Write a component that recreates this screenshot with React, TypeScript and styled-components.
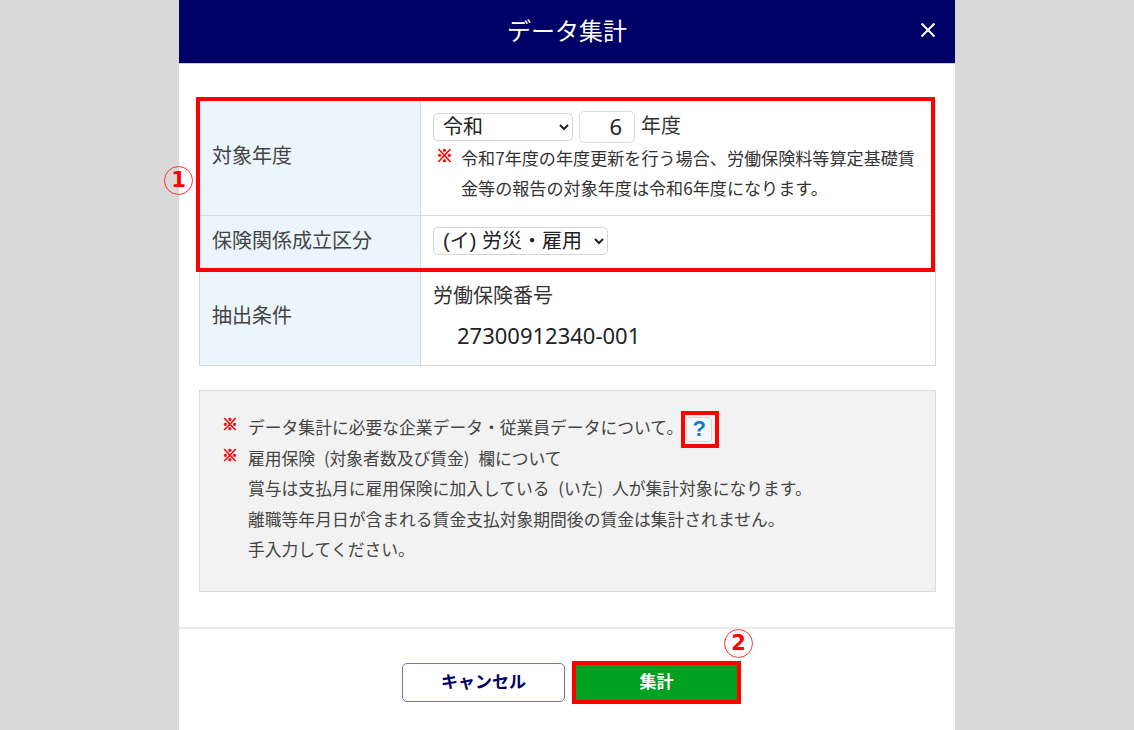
import React from "react";
import styled, { createGlobalStyle } from "styled-components";

const Global = createGlobalStyle`
  html, body { margin: 0; padding: 0; height: 100%; background: #d9d9d9; }
  body { font-family: "Noto Sans CJK JP", "Noto Sans", sans-serif; color: #333; }
  * { box-sizing: border-box; }
`;

const Page = styled.div`
  width: 1134px;
  height: 730px;
  overflow: hidden;
  display: flex;
  justify-content: center;
`;

const Modal = styled.div`
  position: relative;
  width: 776px;
  height: 730px;
  background: #fff;
  display: flex;
  flex-direction: column;
`;

const Header = styled.header`
  position: relative;
  height: 64px;
  background: #000066;
  border-bottom: 1px solid #c8c8e0;
  display: flex;
  align-items: center;
  justify-content: center;
  color: #fff;
  font-size: 24px;
  line-height: 60px;
  padding-bottom: 3px;
`;

const CloseButton = styled.button`
  position: absolute;
  right: 18px;
  top: 21px;
  width: 18px;
  height: 18px;
  padding: 0;
  border: 0;
  background: none;
  display: flex;
`;

const Body = styled.div`
  padding: 36px 19px 0 20px;
  flex: 1;
`;

const Table = styled.table`
  width: 737px;
  border-collapse: collapse;
  table-layout: fixed;
`;

const Label = styled.th`
  width: 221px;
  background: #edf5fc;
  border: 1px solid #d8d8d8;
  padding: 0 0 7px 12px;
  text-align: left;
  font-weight: 400;
  font-size: 20px;
  color: #444;
`;

const Cell = styled.td<{ $h: number }>`
  height: ${(p) => p.$h}px;
  border: 1px solid #d8d8d8;
  padding: 0 12px;
  vertical-align: top;
`;

const Line = styled.div<{ $top: number }>`
  display: flex;
  align-items: center;
  gap: 6px;
  height: ${(p) => p.$top + 32}px;
  padding-top: ${(p) => p.$top}px;
  font-size: 20px;
  line-height: 32px;
`;

const Select = styled.select<{ $w: number }>`
  width: ${(p) => p.$w}px;
  height: 28px;
  font-family: "Liberation Sans", "Noto Sans CJK JP", sans-serif;
  font-size: 20px;
  color: #222;
  background: #fff;
  border: 1px solid #d6d6d6;
  border-radius: 5px;
  padding: 0 0 1px 5px;
  outline: none;
`;

const YearInput = styled.input`
  width: 56px;
  height: 32px;
  font-family: "Noto Sans", sans-serif;
  font-size: 22px;
  color: #222;
  text-align: right;
  padding: 0 12px 3px 0;
  border: 1px solid #dcdcdc;
  border-radius: 5px;
  outline: none;
`;

const Unit = styled.span`
  line-height: 28px;
  padding-bottom: 5px;
  color: #333;
`;

const Note = styled.div`
  position: relative;
  padding: 0 0 0 28px;
  font-size: 17.1px;
  line-height: 29.5px;
  color: #333;
`;

const Mark = styled.span`
  position: absolute;
  left: 3px;
  top: -3px;
  color: #ff0000;
  font-size: 17px;
  font-weight: 700;
  line-height: 30px;
  -webkit-text-stroke: 0.6px #ff0000;
`;

const SubLabel = styled.div`
  font-size: 20px;
  line-height: 32px;
  color: #333;
  padding-top: 9px;
`;

const Number = styled.div`
  font-family: "Noto Sans", sans-serif;
  font-size: 22px;
  line-height: 32px;
  color: #222;
  padding: 8px 0 0 24px;
`;

const Notice = styled.div`
  margin-top: 24px;
  width: 737px;
  height: 202px;
  background: #f2f2f2;
  border: 1px solid #dcdcdc;
  padding: 21px 0 0 48px;
  font-size: 16.8px;
  line-height: 30.6px;
  color: #444;
  word-spacing: 5px;
`;

const NoticeRow = styled.div`
  position: relative;
  display: flex;
  align-items: center;
`;

const NoticeMark = styled.span`
  position: absolute;
  left: -26px;
  top: -4px;
  color: #ff0000;
  font-size: 16px;
  font-weight: 700;
  -webkit-text-stroke: 0.6px #ff0000;
`;

const Help = styled.span`
  width: 26px;
  height: 25px;
  margin: 4px 0 0 3px;
  display: inline-flex;
  align-items: center;
  justify-content: center;
  background: #f3f8fd;
  border: 1px solid #d5d5d5;
  border-radius: 4px;
  color: #1478c8;
  font-family: "Liberation Sans", sans-serif;
  font-weight: 700;
  font-size: 22px;
`;

const Footer = styled.footer`
  height: 103px;
  border-top: 2px solid #ececec;
  display: flex;
  justify-content: center;
  gap: 11px;
  padding-top: 34px;
  padding-left: 5px;
`;

const Cancel = styled.button`
  width: 163px;
  height: 39px;
  background: #fff;
  border: 1px solid #7474ae;
  border-radius: 5px;
  color: #000066;
  font: inherit;
  font-weight: 700;
  font-size: 17px;
  padding: 0 0 5px;
`;

const Submit = styled.button`
  width: 161px;
  height: 36px;
  margin-top: 1px;
  background: #00a020;
  border: 0;
  color: #fff;
  font: inherit;
  font-weight: 700;
  font-size: 17px;
  padding: 0 0 3px;
`;

const Callout = styled.div<{ $x: number; $y: number; $w: number; $h: number; $b: number }>`
  position: absolute;
  left: ${(p) => p.$x}px;
  top: ${(p) => p.$y}px;
  width: ${(p) => p.$w}px;
  height: ${(p) => p.$h}px;
  border: ${(p) => p.$b}px solid #ff0000;
  pointer-events: none;
`;

const Circled = styled.div<{ $x: number; $y: number }>`
  position: absolute;
  left: ${(p) => p.$x}px;
  top: ${(p) => p.$y}px;
  width: 29px;
  height: 29px;
  border: 1px solid #ff3030;
  border-radius: 50%;
  color: #ff0000;
  font-family: "DejaVu Sans", sans-serif;
  font-weight: 700;
  font-size: 21px;
  line-height: 27px;
  text-align: center;
`;

export default function App() {
  return (
    <Page>
      <Global />
      <Modal>
        <Header>
          データ集計
          <CloseButton aria-label="閉じる">
            <svg width="18" height="18" viewBox="0 0 18 18">
              <path d="M2.5 2.5 L15.5 15.5 M15.5 2.5 L2.5 15.5" stroke="#fff" strokeWidth="2" fill="none" />
            </svg>
          </CloseButton>
        </Header>
        <Body>
          <Table>
            <tbody>
              <tr>
                <Label>対象年度</Label>
                <Cell $h={115}>
                  <Line $top={10}>
                    <Select $w={140} defaultValue="令和">
                      <option>令和</option>
                    </Select>
                    <YearInput defaultValue="6" />
                    <Unit>年度</Unit>
                  </Line>
                  <Note>
                    <Mark>※</Mark>
                    令和7年度の年度更新を行う場合、労働保険料等算定基礎賃金等の報告の対象年度は令和6年度になります。
                  </Note>
                </Cell>
              </tr>
              <tr>
                <Label>保険関係成立区分</Label>
                <Cell $h={54}>
                  <Line $top={9}>
                    <Select $w={175} defaultValue="a">
                      <option value="a">(イ) 労災・雇用</option>
                    </Select>
                  </Line>
                </Cell>
              </tr>
              <tr>
                <Label>抽出条件</Label>
                <Cell $h={96}>
                  <SubLabel>労働保険番号</SubLabel>
                  <Number>27300912340-001</Number>
                </Cell>
              </tr>
            </tbody>
          </Table>
          <Notice>
            <NoticeRow>
              <NoticeMark>※</NoticeMark>
              データ集計に必要な企業データ・従業員データについて。
              <Help>?</Help>
            </NoticeRow>
            <NoticeRow>
              <NoticeMark>※</NoticeMark>
              雇用保険 (対象者数及び賃金) 欄について
            </NoticeRow>
            <NoticeRow>賞与は支払月に雇用保険に加入している (いた) 人が集計対象になります。</NoticeRow>
            <NoticeRow>離職等年月日が含まれる賃金支払対象期間後の賃金は集計されません。</NoticeRow>
            <NoticeRow>手入力してください。</NoticeRow>
          </Notice>
        </Body>
        <Footer>
          <Cancel>キャンセル</Cancel>
          <Submit>集計</Submit>
        </Footer>
        <Callout $x={17} $y={97} $w={739} $h={175} $b={4} />
        <Callout $x={502} $y={411} $w={38} $h={37} $b={4} />
        <Callout $x={393} $y={661} $w={169} $h={43} $b={4} />
        <Circled $x={-15} $y={166}>1</Circled>
        <Circled $x={545} $y={629}>2</Circled>
      </Modal>
    </Page>
  );
}
